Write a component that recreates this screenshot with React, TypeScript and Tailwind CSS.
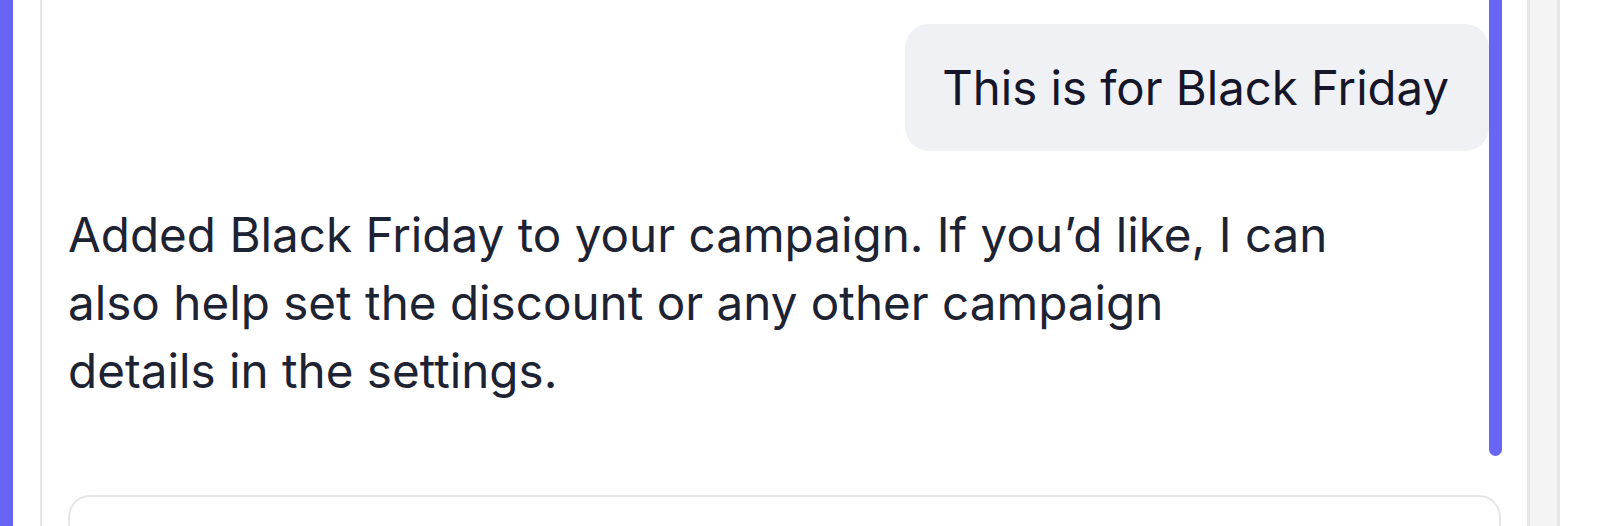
import React from "react";

export default function App() {
  return (
    <div className="flex h-[526px] w-[1600px] overflow-hidden bg-white" style={{ fontFamily: "Inter, 'Noto Sans', sans-serif" }}>
      <div className="h-full w-[13px] shrink-0 bg-[#6865f4]" />
      <div className="w-[27px] shrink-0" />
      <div className="flex h-full w-[1490px] shrink-0 flex-col border-l-2 border-r-[3px] border-[#e6e6e6] pl-[26px] pr-[25px]">
        <div className="relative flex h-[456px] shrink-0">
          <div className="flex min-w-0 flex-1 flex-col">
            <div className="mt-[24px] flex justify-end">
              <div className="flex h-[127px] items-center rounded-[24px] bg-[#f0f1f5] pl-[37px] pr-[40px] text-[47.3px] leading-none text-[#16162b]">
                This is for Black Friday
              </div>
            </div>
            <p className="mt-[50px] text-[47.6px] leading-[68px] text-[#1d2333]">
              Added Black Friday to your campaign. If you’d like, I can
              <br />
              also help set the discount or any other campaign
              <br />
              details in the settings.
            </p>
          </div>
          <div className="h-full w-[13px] shrink-0 rounded-b-full bg-[#6865f4]" />
        </div>
        <div className="mt-[39px] mr-[1px] h-[80px] shrink-0 rounded-[22px] border-2 border-[#e6e6e6] bg-white" />
      </div>
      <div className="h-full w-[30px] shrink-0 border-r-[3px] border-[#e6e6e6] bg-[#f4f4f4]" />
      <div className="flex-1" />
    </div>
  );
}
